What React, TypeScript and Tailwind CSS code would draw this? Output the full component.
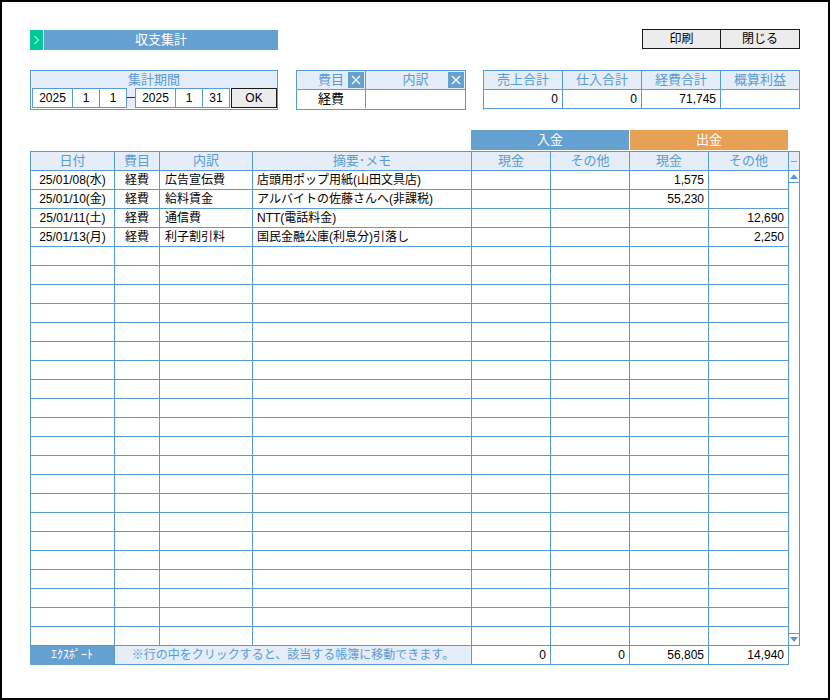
import React from "react";

const FONT = '"Liberation Sans Narrow", "Liberation Sans", "Noto Sans CJK JP", sans-serif';

const colWidths = ["w-[84px]", "w-[45px]", "w-[93px]", "w-[219px]", "w-[79px]", "w-[79px]", "w-[79px]", "w-[80px]"];
const headers = ["日付", "費目", "内訳", "摘要･メモ", "現金", "その他", "現金", "その他"];

const rows = [
  ["25/01/08(水)", "経費", "広告宣伝費", "店頭用ポップ用紙(山田文具店)", "", "", "1,575", ""],
  ["25/01/10(金)", "経費", "給料賃金", "アルバイトの佐藤さんへ(非課税)", "", "", "55,230", ""],
  ["25/01/11(土)", "経費", "通信費", "NTT(電話料金)", "", "", "", "12,690"],
  ["25/01/13(月)", "経費", "利子割引料", "国民金融公庫(利息分)引落し", "", "", "", "2,250"],
];
const ROW_COUNT = 25;

// alignment per column
const align = ["text-center", "text-center", "text-left pl-[5px]", "text-left pl-[4px]", "text-right pr-[4px]", "text-right pr-[4px]", "text-right pr-[4px]", "text-right pr-[4px]"];

function XButton() {
  return (
    <div className="absolute right-[1px] top-[1px] w-[16px] h-[16px] bg-[#64a0d0] flex items-center justify-center">
      <svg width="10" height="10" viewBox="0 0 10 10">
        <path d="M1 1 L9 9 M9 1 L1 9" stroke="white" strokeWidth="1.2" />
      </svg>
    </div>
  );
}

export default function App() {
  const body = Array.from({ length: ROW_COUNT }, (_, i) => rows[i] ?? ["", "", "", "", "", "", "", ""]);

  return (
    <div
      className="w-[830px] h-[700px] border-2 border-black bg-white text-[12px] text-black overflow-hidden"
      style={{ fontFamily: FONT }}
    >
      <div className="pl-[28px] pt-[27px]">
        {/* title + buttons */}
        <div className="flex justify-between items-start w-[770px]">
          <div className="flex mt-[1px] h-[20px] w-[248px]">
            <div className="w-[13px] bg-[#00c896] flex items-center justify-center">
              <svg width="7" height="10" viewBox="0 0 7 10">
                <path d="M1.5 1 L5.5 5 L1.5 9" stroke="white" strokeWidth="1" fill="none" />
              </svg>
            </div>
            <div className="ml-[1px] flex-1 bg-[#64a0d0] text-white text-[13px] leading-[20px] text-center">
              収支集計
            </div>
          </div>
          <div className="flex">
            <div className="w-[79px] h-[20px] border border-[#1a1a1a] bg-[#ececec] text-center leading-[18px]">印刷</div>
            <div className="w-[79px] h-[20px] border border-l-0 border-[#1a1a1a] bg-[#ececec] text-center leading-[18px]">閉じる</div>
          </div>
        </div>

        {/* boxes */}
        <div className="flex mt-[20px]">
          <div className="w-[248px] border border-[#5b9bd5]">
            <div className="h-[17px] bg-[#e4edf8] text-[#5b9bd5] text-[13px] leading-[18px] text-center">集計期間</div>
            <div className="flex pl-[1px] pb-[1px] h-[21px]">
              <div className="w-[41px] h-[20px] border border-[#5b9bd5] text-center leading-[18px]">2025</div>
              <div className="w-[27px] h-[20px] border border-l-0 border-[#5b9bd5] text-center leading-[18px]">1</div>
              <div className="w-[27px] h-[20px] border border-l-0 border-[#5b9bd5] text-center leading-[18px]">1</div>
              <div className="w-[8px] h-[20px] bg-[#e4edf8] relative">
                <div className="absolute left-0 right-0 top-[9px] h-[1px] bg-[#333]" />
              </div>
              <div className="w-[41px] h-[20px] border border-[#5b9bd5] text-center leading-[18px]">2025</div>
              <div className="w-[27px] h-[20px] border border-l-0 border-[#5b9bd5] text-center leading-[18px]">1</div>
              <div className="w-[27px] h-[20px] border border-l-0 border-[#5b9bd5] text-center leading-[18px]">31</div>
              <div className="ml-[1px] w-[46px] h-[20px] border border-[#1a1a1a] bg-[#ececec] text-center leading-[18px]">OK</div>
            </div>
          </div>

          <div className="ml-[18px] w-[170px] border border-[#5b9bd5]">
            <div className="flex h-[19px] border-b border-[#5b9bd5] bg-[#e4edf8] text-[#5b9bd5] text-[13px] leading-[18px]">
              <div className="relative w-[69px] border-r border-[#5b9bd5] text-center">
                費目
                <XButton />
              </div>
              <div className="relative flex-1 text-center">
                内訳
                <XButton />
              </div>
            </div>
            <div className="flex h-[18px] leading-[18px]">
              <div className="w-[69px] border-r border-[#5b9bd5] text-center text-[13px]">経費</div>
              <div className="flex-1" />
            </div>
          </div>

          <div className="ml-[17px] w-[317px] border-l border-t border-[#5b9bd5]">
            <div className="flex h-[19px] bg-[#e4edf8] text-[#5b9bd5] text-[13px] leading-[18px]">
              {["売上合計", "仕入合計", "経費合計", "概算利益"].map((h) => (
                <div key={h} className="w-[79px] border-r border-b border-[#5b9bd5] text-center">
                  {h}
                </div>
              ))}
            </div>
            <div className="flex h-[19px] leading-[18px]">
              {["0", "0", "71,745", ""].map((v, i) => (
                <div key={i} className="w-[79px] border-r border-b border-[#5b9bd5] text-right pr-[4px]">
                  {v}
                </div>
              ))}
            </div>
          </div>
        </div>

        {/* group headers */}
        <div className="flex mt-[20px] mb-[1px] h-[20px] text-white text-[13px] leading-[20px]">
          <div className="w-[441px]" />
          <div className="w-[158px] bg-[#64a0d0] text-center">入金</div>
          <div className="ml-[1px] w-[158px] bg-[#e8a055] text-center">出金</div>
        </div>

        {/* table */}
        <div className="flex">
          <div className="border-l border-t border-[#5b9bd5]">
            <div className="flex h-[19px] bg-[#e4edf8] text-[#5b9bd5] text-[13px] leading-[18px]">
              {headers.map((h, i) => (
                <div key={i} className={`${colWidths[i]} border-r border-b border-[#5b9bd5] text-center`}>
                  {h}
                </div>
              ))}
            </div>
            {body.map((r, ri) => (
              <div key={ri} className="flex h-[19px] leading-[18px]">
                {r.map((c, ci) => (
                  <div
                    key={ci}
                    className={`${colWidths[ci]} ${align[ci]} border-r border-b border-[#5b9bd5] whitespace-nowrap overflow-hidden`}
                  >
                    {c}
                  </div>
                ))}
              </div>
            ))}
          </div>
          <div className="w-[11px] flex flex-col border-t border-r border-[#5b9bd5]">
            <div className="h-[19px] border-b border-[#5b9bd5] bg-[#e4edf8] flex items-center justify-center">
              <div className="w-[6px] h-[1px] bg-[#7aa6d4]" />
            </div>
            <div className="flex-1 flex flex-col border-b border-[#5b9bd5]">
              <div className="h-[12px] border-b border-[#5b9bd5] flex items-center justify-center">
                <svg width="8" height="5" viewBox="0 0 8 5">
                  <path d="M0 5 L4 0 L8 5 Z" fill="#5b9bd5" />
                </svg>
              </div>
              <div className="flex-1" />
              <div className="h-[12px] border-t border-[#5b9bd5] flex items-center justify-center">
                <svg width="8" height="5" viewBox="0 0 8 5">
                  <path d="M0 0 L8 0 L4 5 Z" fill="#5b9bd5" />
                </svg>
              </div>
            </div>
          </div>
        </div>

        {/* footer */}
        <div className="flex h-[19px] leading-[18px]">
          <div className="w-[84px] h-[19px] bg-[#64a0d0] text-white text-center">ｴｸｽﾎﾟｰﾄ</div>
          <div className="w-[358px] border-l border-r border-b border-[#5b9bd5] bg-[#e4edf8] text-[#5b9bd5] text-center whitespace-nowrap">
            ※行の中をクリックすると、該当する帳簿に移動できます。
          </div>
          {["0", "0", "56,805", "14,940"].map((v, i) => (
            <div key={i} className={`${colWidths[i + 4]} border-r border-b border-[#5b9bd5] text-right pr-[4px]`}>
              {v}
            </div>
          ))}
        </div>
      </div>
    </div>
  );
}
